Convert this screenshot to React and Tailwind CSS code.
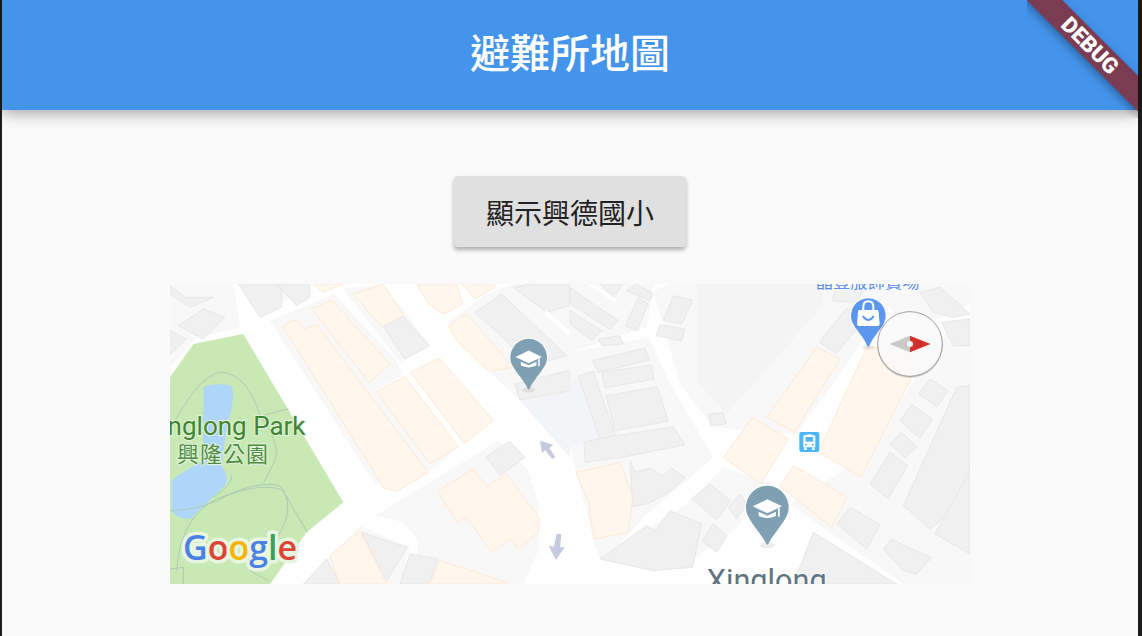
import React from 'react'

const cjk = { fontFamily: '"Noto Sans CJK TC", "Noto Sans", sans-serif' }

const BLOCK = '#f8f8f8'
const BUILDING = '#f0f0f0'
const BUILDING_EDGE = '#e3e3e3'
const SHOP = '#fff6ee'
const SHOP_EDGE = '#fee6cd'

// all map shapes are in 3x crop coordinates, left half then right half
const leftBlocks = [
  '0,0 190,0 210,130 75,165 0,250',
  '205,0 420,0 280,100',
  '300,110 400,70 490,30 680,235 700,270 615,320 865,490 780,560 615,600',
  '430,70 490,30 680,230 600,300',
  '520,15 640,0 780,185 690,235',
  '835,115 915,55 950,30 1200,230 1200,320 1050,350 960,265',
  '950,30 1030,0 1200,0 1200,230',
  '615,695 985,470 1075,560 1105,660 1105,800 1060,900 740,900 745,770 700,715',
  '400,900 570,725 720,790 690,900',
]

const leftBuildings = [
  '0,5 45,40 130,40 60,70 0,30',
  '25,125 100,75 165,100 100,165',
  '0,140 50,165 0,210',
  '205,0 335,0 335,70 270,100',
  '320,0 420,0 420,40 380,65',
  '638,125 700,97 778,185 705,225',
  '915,85 995,30 1190,215 1065,250 1040,200',
  '1030,10 1080,0 1200,0 1200,65 1130,85',
  '948,518 1020,472 1065,520 990,575',
  '575,745 712,790 650,890',
  '400,900 470,825 510,900',
  '690,900 720,810 805,825 775,900',
  '1035,300 1200,258 1200,320 1050,348',
]

const leftShops = [
  '340,130 355,115 385,108 400,135 440,122 775,565 680,622 640,612 610,560',
  '425,75 485,48 660,240 598,295',
  '550,30 640,0 700,95 635,128',
  '618,322 705,278 865,488 780,540',
  '722,265 808,222 970,410 882,478',
  '835,125 890,90 1030,250 955,262 860,170',
  '740,0 860,0 878,60 820,90 775,60',
  '430,0 520,0 460,25',
  '875,0 975,0 975,10 915,45',
  '803,622 908,555 950,605 1010,572 1110,705 1105,745 1045,795 1020,765 965,805 890,700 860,715',
  '480,815 570,740 650,900 510,900',
  '780,900 810,830 1010,895 1010,900',
]

const rightBlocks = [
  '0,205 235,160 300,300 430,520 220,700 130,800 90,825 72,770 18,565 0,490',
  '250,20 300,0 380,0 380,290 470,390 755,70 760,0 1000,0 880,170 680,450 430,430 330,300',
  '600,600 460,550 350,660 130,800 90,825 250,860 340,850 500,730',
  '660,660 850,540 1000,340 1150,110 1200,130 1200,900 1000,900',
  '0,0 250,0 230,130 0,205',
  '760,0 1200,0 1200,60 1030,140 960,70',
]

const rightBuildings = [
  '68,230 225,192 238,228 85,265',
  '95,265 245,243 252,285 105,312',
  '108,335 262,308 295,412 135,440',
  '25,275 70,262 150,495 100,495',
  '140,455 310,428 345,483 155,520 45,535 42,475 95,462',
  '310,35 368,48 335,120 280,108',
  '270,122 345,135 335,170 258,155',
  '415,390 460,385 468,420 422,425',
  '0,10 70,60 145,110 120,135 0,60',
  '0,80 95,140 65,170 0,120',
  '90,0 160,0 130,40',
  '170,20 200,0 250,30 240,50',
  '205,40 235,60 200,140 165,125',
  '85,165 150,155 160,180 95,185',
  '365,645 420,600 482,650 440,708',
  '475,670 510,630 530,660 500,705',
  '395,770 430,720 472,755 440,805',
  '90,825 230,725 255,740 300,680 395,720 368,850 250,860',
  '180,530 195,565 240,552 278,575 305,552 345,582 290,630 230,660 188,668',
  '748,175 830,72 880,110 800,208',
  '800,10 890,10 855,55 785,50',
  '800,720 840,670 930,722 890,795',
  '940,795 965,765 1035,800 1085,820 1040,870 1000,860',
  '670,900 730,745 980,900',
  '900,600 960,505 1012,545 955,645',
  '960,480 995,445 1042,488 1005,522',
  '990,410 1025,362 1088,405 1050,462',
  '1045,330 1080,285 1135,320 1100,368',
  '1000,665 1160,310 1200,305 1200,640 1080,735',
  '1095,750 1200,560 1200,810',
  '1050,25 1110,10 1200,90 1150,100 1090,85',
  '1115,115 1200,105 1200,185 1150,185',
]

const rightShops = [
  '740,190 810,225 672,445 592,398',
  '548,400 655,465 572,600 460,520',
  '890,190 1040,190 1020,290 872,578 745,505',
  '672,545 830,640 785,730 628,605',
  '18,565 150,535 188,640 175,745 72,765 55,650',
]

const Polys = ({ items, fill, stroke }) =>
  items.map(points => (
    <polygon
      key={points}
      points={points}
      fill={fill}
      stroke={stroke}
      strokeWidth={stroke ? 2.5 : 0}
      strokeLinejoin="round"
    />
  ))

// pin with the round head at cx,cy and the tip at cx,tip
const Pin = ({ cx, cy, r, tip, fill }) => (
  <g>
    <ellipse cx={cx} cy={tip + 2} rx={r * 0.35} ry={r * 0.14} fill="#000" opacity="0.07" />
    <circle cx={cx} cy={cy} r={r + 4} fill="#fff" opacity="0.8" />
    <path
      d={`M${cx - r * 0.93} ${cy + r * 0.36} A${r} ${r} 0 1 1 ${cx + r * 0.93} ${cy + r * 0.36} C${cx + r * 0.7} ${cy + r * 0.85} ${cx + r * 0.2} ${tip - 25} ${cx + 3} ${tip - 2} Q${cx} ${tip + 2} ${cx - 3} ${tip - 2} C${cx - r * 0.2} ${tip - 25} ${cx - r * 0.7} ${cy + r * 0.85} ${cx - r * 0.93} ${cy + r * 0.36} Z`}
      fill={fill}
    />
  </g>
)

const GradCap = ({ x, y, s }) => (
  <g transform={`translate(${x} ${y}) scale(${s})`} fill="#fff">
    <path d="M0 -18 L44 3 L0 24 L-44 3 Z" />
    <path d="M-26 19 L0 31 L26 19 L26 32 Q0 44 -26 32 Z" />
    <rect x="32" y="8" width="5" height="26" />
  </g>
)

const MapPicture = () => (
  <svg viewBox="0 0 800 300" className="block w-[800px] h-[300px]" style={cjk}>
    <rect width="800" height="300" fill="#fff" />

    {/* left half */}
    <g transform="scale(0.33333)">
      <Polys items={leftBlocks} fill={BLOCK} />
      <polygon points="1050,350 1200,320 1200,520" fill="#f2f4f7" />
      <Polys items={leftBuildings} fill={BUILDING} stroke={BUILDING_EDGE} />
      <Polys items={leftShops} fill={SHOP} stroke={SHOP_EDGE} />

      {/* park */}
      <polygon points="0,280 70,180 220,150 520,655 410,745 300,900 0,900" fill="#c9e9b4" />
      <path
        d="M100 310 Q130 295 185 305 Q198 340 170 430 L155 545 Q180 580 165 605 L60 705 Q20 705 5 680 L5 590 Q40 560 100 530 Z"
        fill="#aed6fb"
      />
      <g fill="none" stroke="#acc9b4" strokeWidth="3">
        <path d="M0 440 Q80 280 150 265 Q230 265 270 395 Q340 490 310 540 L280 598" />
        <path d="M0 680 Q100 680 190 625 Q280 590 330 605 L412 745" />
        <path d="M20 860 Q30 700 140 645 Q280 590 340 620 Q380 690 300 790 L240 860 L295 890" />
        <path d="M275 395 L355 375" />
        <path d="M0 855 L40 850 L40 900" />
        <path d="M185 575 Q190 600 130 640" />
      </g>

      <path d="M1110 470 L1150 482 L1138 492 L1156 520 L1146 525 L1126 498 L1116 508 Z" fill="#c6cae0" />
      <path d="M1160 750 L1174 750 L1170 790 L1184 790 L1158 828 L1136 785 L1152 788 Z" fill="#c6cae0" />

      <path d="M1125 85 L1200 150" stroke="#fff" strokeWidth="14" />

      <Pin cx={1076} cy={220} r={55} tip={316} fill="#7f9fb3" />
      <GradCap x={1076} y={216} s={0.9} />
    </g>

    {/* right half */}
    <g transform="translate(400) scale(0.33333)">
      <Polys items={rightBlocks} fill={BLOCK} />
      <polygon points="0,300 25,275 100,495 42,475 0,490" fill="#f2f4f7" />
      <polygon points="380,0 760,0 755,70 470,390 380,290" fill="#f4f4f4" />
      <Polys items={rightBuildings} fill={BUILDING} stroke={BUILDING_EDGE} />
      <Polys items={rightShops} fill={SHOP} stroke={SHOP_EDGE} />

      <path d="M60 0 L135 50" stroke="#fff" strokeWidth="12" strokeLinecap="round" />

      <Pin cx={592} cy={670} r={64} tip={782} fill="#7f9fb3" />
      <GradCap x={592} y={664} s={1} />

      <text
        x="737"
        y="12"
        fontSize="52"
        fill="#5b8def"
        stroke="#fff"
        strokeWidth="5"
        paintOrder="stroke"
      >
        晶豐服飾賣場
      </text>

      <Pin cx={895} cy={95} r={52} tip={188} fill="#5b97ef" />
      <path d="M868 78 H922 Q926 78 926 84 L929 120 Q929 126 923 126 H867 Q861 126 861 120 L864 84 Q864 78 868 78 Z" fill="#fff" />
      <path d="M880 78 V68 Q880 52 895 52 Q910 52 910 68 V78" fill="none" stroke="#fff" strokeWidth="6" />
      <path d="M880 98 Q895 118 910 98" fill="none" stroke="#5b97ef" strokeWidth="6" strokeLinecap="round" />

      {/* bus stop */}
      <rect x="684" y="440" width="68" height="68" rx="8" fill="#fff" />
      <rect x="688" y="444" width="60" height="60" rx="6" fill="#4db6f7" />
      <path d="M700 455 Q718 446 736 455 V490 H700 Z" fill="#fff" />
      <rect x="707" y="459" width="22" height="14" fill="#4db6f7" />
      <rect x="702" y="490" width="8" height="8" fill="#fff" />
      <rect x="726" y="490" width="8" height="8" fill="#fff" />
      <circle cx="708" cy="482" r="3" fill="#4db6f7" />
      <circle cx="728" cy="482" r="3" fill="#4db6f7" />

      <text
        x="590"
        y="920"
        fontSize="92"
        textAnchor="middle"
        fill="#5f7482"
        stroke="#fff"
        strokeWidth="6"
        paintOrder="stroke"
        style={{ fontFamily: 'Roboto, sans-serif' }}
      >
        Xinglong
      </text>

      {/* compass */}
      <circle cx="1020" cy="184" r="98" fill="#000" opacity="0.16" />
      <circle cx="1020" cy="180" r="97" fill="#fff" fillOpacity="0.88" stroke="#8a8a8a" strokeWidth="2.5" />
      <polygon points="958,180 1020,155 1020,205" fill="#c9c9c9" />
      <polygon points="1020,155 1082,180 1020,205" fill="#d2302a" />
      <circle cx="1020" cy="180" r="9" fill="#fff" />
    </g>

    <text
      x="-25"
      y="151"
      fontSize="26"
      fill="#3f8533"
      stroke="#e4f3da"
      strokeWidth="2"
      paintOrder="stroke"
      style={{ fontFamily: 'Roboto, sans-serif' }}
    >
      Xinglong Park
    </text>
    <text
      x="53"
      y="178"
      fontSize="22"
      textAnchor="middle"
      letterSpacing="1"
      fill="#4f8d45"
      stroke="#e4f3da"
      strokeWidth="2"
      paintOrder="stroke"
    >
      興隆公園
    </text>

    <text
      x="13"
      y="276"
      fontSize="34"
      fontWeight="600"
      stroke="#e8f5e0"
      strokeWidth="7"
      paintOrder="stroke"
      strokeLinejoin="round"
      style={{ fontFamily: '"Open Sans", sans-serif' }}
    >
      <tspan fill="#4a82e4">G</tspan>
      <tspan fill="#db4437">o</tspan>
      <tspan fill="#f4b400">o</tspan>
      <tspan fill="#4a82e4">g</tspan>
      <tspan fill="#3f9e57">l</tspan>
      <tspan fill="#db4437">e</tspan>
    </text>
  </svg>
)

const DebugBanner = () => (
  <div className="absolute top-0 right-0 w-[111px] h-[118px] overflow-hidden pointer-events-none">
    <div className="absolute left-[-37px] top-[33px] w-[200px] h-[25px] rotate-45 bg-[#7b3b50] shadow-[0_3px_8px_rgba(0,0,0,0.35)] flex items-center justify-center">
      <span className="text-white text-[22px] font-black leading-none font-['Roboto',sans-serif]">DEBUG</span>
    </div>
  </div>
)

const App = () => {
  return (
    <div className="h-[636px] w-[1142px] overflow-hidden bg-[#1c1c1c] pl-[2px] pr-[4px]" style={cjk}>
      <div className="relative flex h-full flex-col items-center bg-[#fafafa]">
        <header className="flex h-[110px] w-full shrink-0 items-center justify-center bg-[#4494ec] pb-[8px] shadow-[0_4px_14px_rgba(0,0,0,0.32)]">
          <h1 className="text-[40px] font-medium leading-none text-white">避難所地圖</h1>
        </header>
        <DebugBanner />

        <button className="mt-[66px] flex h-[71px] w-[232px] items-center justify-center rounded-[4px] bg-[#e0e0e0] text-[28px] text-[#222222] shadow-[0_3px_4px_rgba(0,0,0,0.3)]">
          顯示興德國小
        </button>

        <div className="mt-[37px]">
          <MapPicture />
        </div>
      </div>
    </div>
  )
}

export default App
